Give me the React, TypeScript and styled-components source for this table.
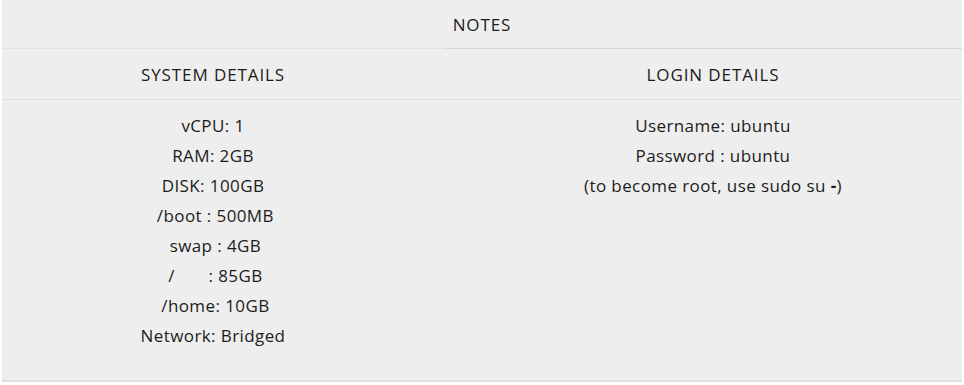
import React from 'react'
import styled, { createGlobalStyle } from 'styled-components'

const GlobalStyle = createGlobalStyle`
  html, body {
    margin: 0;
    padding: 0;
    background: #fff;
  }
  body {
    font-family: 'Open Sans', 'Noto Sans', sans-serif;
    color: #1c1c1c;
  }
`

const Panel = styled.section`
  margin: 0 2px;
  width: 960px;
  background-color: #eeeeee;
  border-bottom: 2px solid #e0e0e0;
  font-size: 17px;
  letter-spacing: 0.4px;
`

const Title = styled.div`
  position: relative;
  height: 49px;
  line-height: 50px;
  text-align: center;
  letter-spacing: 0.9px;

  &::after {
    content: '';
    position: absolute;
    left: 0;
    right: 0;
    bottom: 0;
    height: 1px;
    background: linear-gradient(to right, #e2e2e2 443px, #d6d6d6 443px);
  }
`

const Columns = styled.div`
  display: grid;
  grid-template-columns: 422px 1fr;
  padding-bottom: 29px;
`

const ColumnHead = styled.div`
  height: 50px;
  line-height: 52px;
  border-bottom: 1px solid #dedede;
  text-align: center;
  letter-spacing: 0.9px;
`

const Column = styled.div<{ $shift?: number }>`
  display: flex;
  flex-direction: column;

  ${ColumnHead}, ul {
    padding-left: ${({ $shift }) => $shift ?? 0}px;
  }
`

const Lines = styled.ul`
  list-style: none;
  margin: 0;
  padding: 11px 0 0;
  text-align: center;
  line-height: 30px;
  white-space: pre;
`

const Strong = styled.b`
  font-weight: 700;
`

const systemDetails = [
  'vCPU: 1',
  'RAM: 2GB',
  'DISK: 100GB',
  '\u00a0/boot : 500MB',
  '\u00a0swap : 4GB',
  '\u00a0/\u00a0\u00a0\u00a0\u00a0\u00a0\u00a0\u00a0: 85GB',
  '\u00a0/home: 10GB',
  'Network: Bridged',
]

const App = () => {
  return (
    <>
      <GlobalStyle />
      <Panel>
        <Title>NOTES</Title>
        <Columns>
          <Column>
            <ColumnHead>SYSTEM DETAILS</ColumnHead>
            <Lines>
              {systemDetails.map((line) => (
                <li key={line}>{line}</li>
              ))}
            </Lines>
          </Column>
          <Column $shift={40}>
            <ColumnHead>LOGIN DETAILS</ColumnHead>
            <Lines>
              <li>Username: ubuntu</li>
              <li>Password : ubuntu</li>
              <li>
                (to become root, use sudo su <Strong>-</Strong>)
              </li>
            </Lines>
          </Column>
        </Columns>
      </Panel>
    </>
  )
}

export default App
